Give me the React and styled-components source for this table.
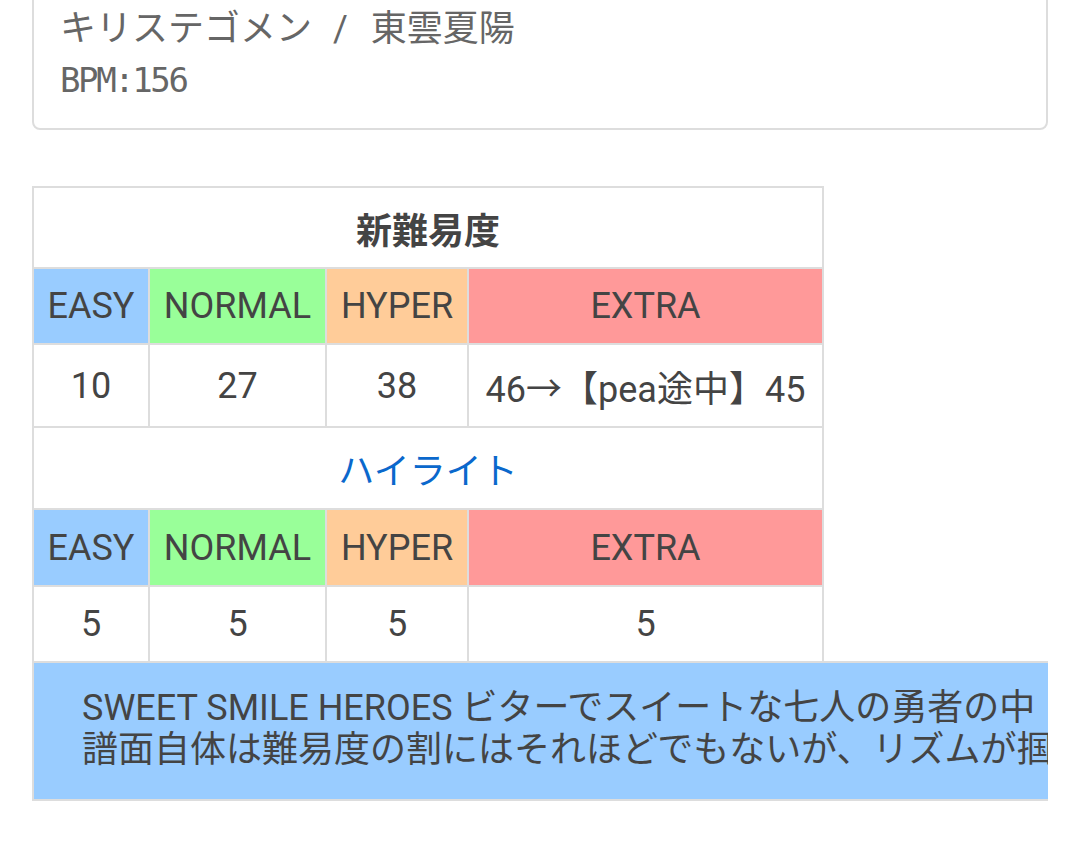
import React from 'react';
import styled, { createGlobalStyle } from 'styled-components';

const GlobalStyle = createGlobalStyle`
    html, body {
        margin: 0;
        padding: 0;
        background: #fff;
    }
    body {
        font-family: Roboto, "Noto Sans CJK JP", sans-serif;
        color: #444;
        overflow: hidden;
    }
`;

const Page = styled.div`
    padding: 0 32px;
    width: 1016px;
`;

const Card = styled.div`
    margin-top: -22px;
    padding: 20px 26px 23px;
    border: 2px solid #ddd;
    border-radius: 8px;
    color: #666;
`;

const Artist = styled.div`
    height: 50px;
    font-family: "Noto Sans CJK JP", Roboto, sans-serif;
    font-size: 36px;
    line-height: 50px;
    white-space: pre;
`;

const Slash = styled.span`
    margin: 0 14px 0 12px;
    font-family: Roboto, sans-serif;
    line-height: 1;
`;

const Bpm = styled.div`
    margin-top: 5px;
    font-family: "DejaVu Sans Mono", monospace;
    font-size: 34px;
    letter-spacing: -2.4px;
    line-height: 50px;
`;

const Scroller = styled.div`
    margin-top: 56px;
    overflow: hidden;
    width: 1016px;
`;

const Grid = styled.div`
    display: grid;
    grid-template-columns: 114px 175px 140px 353px;
    gap: 2px;
    width: max-content;
    padding: 2px 2px 0;
    background: #ddd;
`;

const TitleCell = styled.div`
    grid-column: 1 / -1;
    height: ${p => p.h}px;
    display: flex;
    align-items: center;
    justify-content: center;
    background: #fff;
    font-family: "Noto Sans CJK JP", Roboto, sans-serif;
    font-size: 36px;
    font-weight: ${p => (p.link ? 400 : 700)};
    color: ${p => (p.link ? '#0a68cc' : '#444')};
`;

const LevelCell = styled.div`
    height: ${p => p.h}px;
    display: flex;
    align-items: center;
    justify-content: center;
    background: ${p => p.bg};
    font-size: 36px;
    white-space: nowrap;
`;

const ValueCell = styled.div`
    height: ${p => p.h}px;
    display: flex;
    align-items: center;
    justify-content: center;
    background: #fff;
    font-size: 36px;
    white-space: nowrap;
`;

const Note = styled.div`
    width: 1200px;
    border: 2px solid #ddd;
    background: #99ccff;
    padding: 24px 0 28px 48px;
    font-size: 36px;
    line-height: 42px;
    color: #444;
    white-space: nowrap;
`;

const levels = [
    { name: 'EASY', bg: '#99ccff' },
    { name: 'NORMAL', bg: '#99ff99' },
    { name: 'HYPER', bg: '#ffcc99' },
    { name: 'EXTRA', bg: '#ff9999' },
];

const DifficultyBlock = ({ title, link, values, heights }) => (
    <>
        <TitleCell h={heights[0]} link={link}>{title}</TitleCell>
        {levels.map(l => (
            <LevelCell key={l.name} bg={l.bg} h={heights[1]}>{l.name}</LevelCell>
        ))}
        {values.map((v, i) => (
            <ValueCell key={i} h={heights[2]}>{v}</ValueCell>
        ))}
    </>
);

const App = () => (
    <Page>
        <GlobalStyle />
        <Card>
            <Artist>キリステゴメン<Slash> / </Slash>東雲夏陽</Artist>
            <Bpm>BPM:156</Bpm>
        </Card>
        <Scroller>
            <Grid>
                <DifficultyBlock
                  title="新難易度"
                  values={['10', '27', '38', '46→【pea途中】45']}
                  heights={[79, 74, 81]}
                />
                <DifficultyBlock
                  title="ハイライト"
                  link
                  values={['5', '5', '5', '5']}
                  heights={[80, 75, 74]}
                />
            </Grid>
            <Note>
                <div>SWEET SMILE HEROES ビターでスイートな七人の勇者の中</div>
                <div>譜面自体は難易度の割にはそれほどでもないが、リズムが掴</div>
            </Note>
        </Scroller>
    </Page>
);

export default App;
